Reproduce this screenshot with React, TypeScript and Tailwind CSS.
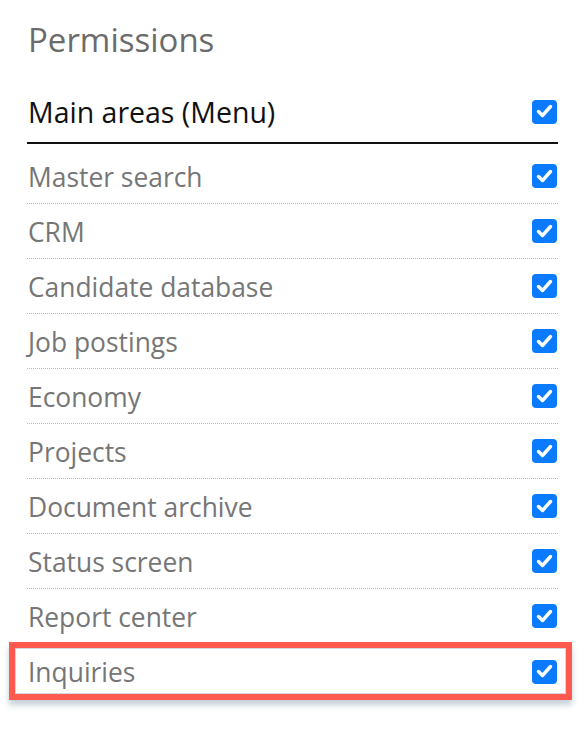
import React from "react";

const areas = [
  "Master search",
  "CRM",
  "Candidate database",
  "Job postings",
  "Economy",
  "Projects",
  "Document archive",
  "Status screen",
  "Report center",
  "Inquiries",
];

const CheckBox = () => (
  <div className="w-[25px] h-[24px] rounded-[4px] bg-[#0a7aff] flex items-center justify-center shrink-0">
    <svg width="17" height="15" viewBox="0 0 17 15" fill="none">
      <path d="M2.5 7.5 L6.5 11.5 L14.5 2.5" stroke="white" strokeWidth="3.4" strokeLinecap="round" strokeLinejoin="round" />
    </svg>
  </div>
);

export default function App() {
  return (
    <div className="w-[582px] h-[732px] bg-white pl-[27px] pr-[24px] pt-[18px] font-['Open_Sans',sans-serif]">
      <h2 className="pl-[1px] text-[33px] leading-[44px] text-[#6b6b6b]">Permissions</h2>

      <div className="mt-[27px] h-[55px] flex items-center justify-between border-b-2 border-[#111] pb-[8px] pl-[1px] pr-[1px]">
        <span className="pt-[2px] text-[28.5px] text-[#111]">Main areas (Menu)</span>
        <CheckBox />
      </div>

      <div className="relative mt-[5px]">
        {areas.map((name, i) => (
          <div
            key={name}
            className={
              i < areas.length - 1
                ? "h-[55px] flex items-center justify-between border-b border-dotted border-[#b8b8b8] pl-[1px] pr-[1px]"
                : "h-[55px] flex items-center justify-between pl-[1px] pr-[1px]"
            }
          >
            <span className="pt-[3px] text-[26.4px] text-[#767676]">{name}</span>
            <CheckBox />
          </div>
        ))}
        <div className="absolute left-[-18px] right-[-14px] bottom-[-1px] h-[58px] border-[6px] border-[#ff5a4f] shadow-[0_5px_6px_rgba(90,120,140,0.35),inset_0_0_0_1px_rgba(180,190,195,0.6)]" />
      </div>
    </div>
  );
}
